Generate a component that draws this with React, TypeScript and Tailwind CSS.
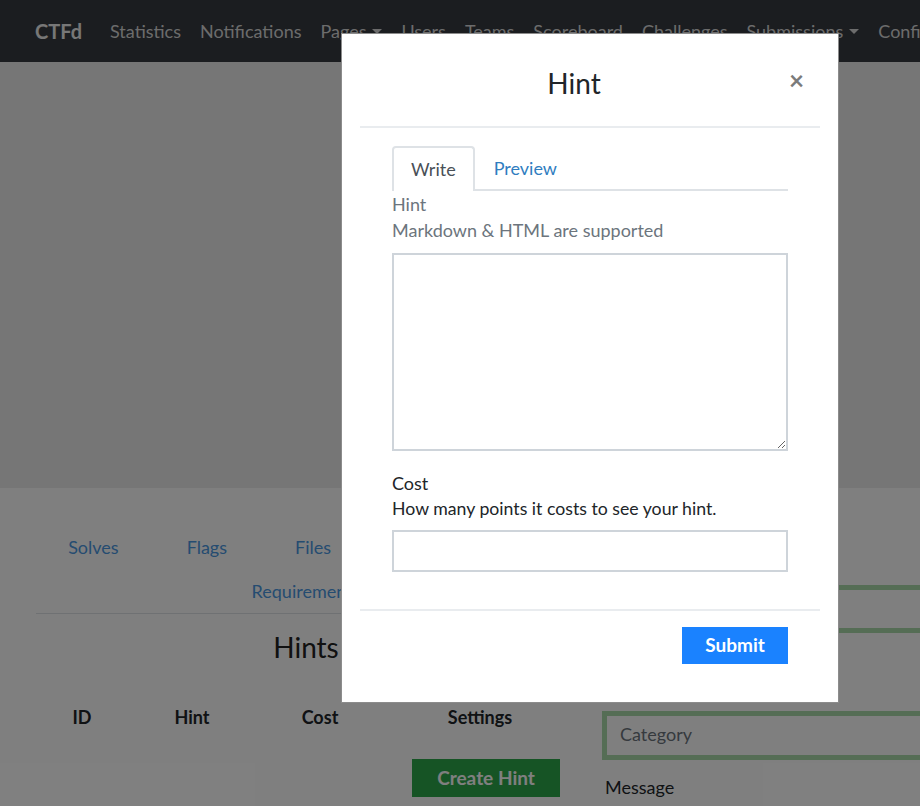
import React from "react";

const navItems = [
  { label: "Statistics" },
  { label: "Notifications" },
  { label: "Pages", caret: true },
  { label: "Users" },
  { label: "Teams" },
  { label: "Scoreboard" },
  { label: "Challenges" },
  { label: "Submissions", caret: true },
  { label: "Config" },
];

const tabs = ["Solves", "Flags", "Files", "Tags", "Hints", "Requirements"];

const Caret = () => (
  <span className="ml-[6px] inline-block h-0 w-0 border-x-[5px] border-t-[5px] border-x-transparent border-t-current align-middle" />
);

const App = () => {
  return (
    <div className="relative h-[806px] w-[920px] overflow-hidden bg-white font-[Lato,'Noto_Sans',sans-serif] text-[#212529]">
      {/* page behind the modal */}
      <nav className="flex h-[62px] items-center whitespace-nowrap bg-[#363a40] pl-[35px]">
        <span className="mr-[28px] text-[20px] font-bold text-[#eeeeee]">CTFd</span>
        <ul className="flex gap-[19px] text-[18px] text-[#d8d8d8]">
          {navItems.map((item) => (
            <li key={item.label} className="flex items-center">
              {item.label}
              {item.caret && <Caret />}
            </li>
          ))}
        </ul>
      </nav>

      <div className="h-[426px] bg-[#ececec]" />

      <div className="flex pt-[37px]">
        <div className="ml-[36px] w-[540px] shrink-0">
          <div className="border-b border-[#dee2e6]">
            <ul className="-mx-[4px] flex flex-wrap justify-center text-[18px] leading-[26px] text-[#4b98e2]">
              {tabs.map((t) => (
                <li key={t} className="px-[34px] py-[9px]">
                  {t}
                </li>
              ))}
            </ul>
          </div>
          <h3 className="mt-[16px] text-center text-[28px] leading-[34px] text-[#222]">Hints</h3>
          <div className="mt-[40px] grid grid-cols-[92px_128px_128px_192px] text-center text-[18px] font-bold leading-[26px]">
            <div>ID</div>
            <div>Hint</div>
            <div>Cost</div>
            <div>Settings</div>
          </div>
          <div className="mt-[29px] grid grid-cols-[348px_192px]">
            <div />
            <div className="flex justify-center">
              <button className="ml-[12px] h-[38px] w-[148px] bg-[#2da84a] text-[19px] font-bold text-white">
                Create Hint
              </button>
            </div>
          </div>
        </div>

        <div className="ml-[26px] w-[360px] shrink-0 text-[18px] leading-[26px]">
          <label className="mt-[26px] block pl-[3px]">Name</label>
          <div className="mt-[8px] h-[48px] border-[5px] border-[#abdaab] bg-white" />
          <label className="mt-[42px] block pl-[3px]">Category</label>
          <div className="mt-[10px] flex h-[49px] items-center border-[5px] border-[#abdaab] bg-white pb-[4px] pl-[13px] text-[#6c757d]">
            Category
          </div>
          <label className="mt-[14px] block pl-[3px]">Message</label>
        </div>
      </div>

      {/* backdrop */}
      <div className="absolute inset-0 bg-black/50" />

      {/* modal */}
      <div className="absolute left-[341px] top-[33px] w-[498px] border border-[#8c8c8c] bg-white">
        <div className="relative mx-[18px] flex h-[94px] items-center justify-center border-b-2 border-[#e9ecef] pr-[32px] pt-[6px]">
          <h5 className="text-[28px] leading-[34px] text-[#212529]">Hint</h5>
          <button className="absolute right-[16px] top-[33px] text-[26px] font-bold leading-[26px] text-[#7b7b7b]">
            ×
          </button>
        </div>

        <div className="px-[50px] pb-[37px] pt-[18px] text-[18px] leading-[26px]">
          <div className="flex h-[45px] border-b-2 border-[#dee2e6]">
            <div className="-mb-[2px] flex items-center rounded-t-[4px] border-2 border-b-0 border-[#dee2e6] bg-white px-[17px] pb-[2px] text-[#495057]">
              Write
            </div>
            <div className="flex items-center px-[19px] text-[#2f7dc0]">Preview</div>
          </div>
          <label className="block text-[#6c757d]">Hint</label>
          <p className="text-[#6c757d]">Markdown &amp; HTML are supported</p>
          <textarea className="mt-[10px] block h-[198px] w-full border-2 border-[#ced4da] outline-none" />

          <label className="mt-[19px] block">Cost</label>
          <p className="text-[17.7px]">How many points it costs to see your hint.</p>
          <input type="text" className="mt-[8px] block h-[42px] w-full border-2 border-[#ced4da] outline-none" />
        </div>

        <div className="mx-[18px] flex justify-end border-t-2 border-[#e9ecef] pb-[38px] pr-[32px] pt-[16px]">
          <button className="h-[37px] w-[106px] bg-[#1a82ff] text-[19px] font-bold text-white">Submit</button>
        </div>
      </div>
    </div>
  );
};

export default App;
